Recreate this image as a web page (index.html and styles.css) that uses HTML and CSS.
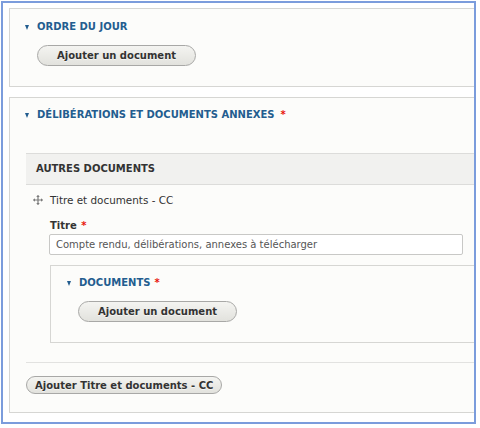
FILE: index.html
```html
<!DOCTYPE html>
<html lang="fr">
<head>
    <meta charset="UTF-8">
    <meta name="viewport" content="width=device-width, initial-scale=1.0">
    <title>Conseil communautaire - Édition</title>
    <link rel="stylesheet" href="styles.css">
</head>
<body>
    <div class="frame">
        <div class="fieldset fs-ordre">
            <div class="legend"><span class="arrow"></span>Ordre du jour</div>
            <button type="button" class="btn">Ajouter un document</button>
        </div>

        <div class="fieldset fs-delib">
            <div class="legend"><span class="arrow"></span>Délibérations et documents annexes <span class="req">*</span></div>

            <div class="table">
                <div class="table-head">Autres documents</div>
                <div class="table-row">
                    <div class="row-title">
                        <svg class="handle" width="10" height="10" viewBox="0 0 10 10">
                            <path d="M5 0.5 L5 9.5 M0.5 5 L9.5 5" stroke="#7a7a7a" stroke-width="1.2" fill="none"/>
                            <path d="M5 0 L3.2 2 L6.8 2 Z M5 10 L3.2 8 L6.8 8 Z M0 5 L2 3.2 L2 6.8 Z M10 5 L8 3.2 L8 6.8 Z" fill="#7a7a7a"/>
                        </svg>
                        Titre et documents - CC
                    </div>
                    <div class="form-item">
                        <label for="titre">Titre <span class="req">*</span></label>
                        <input type="text" id="titre" value="Compte rendu, délibérations, annexes à télécharger">
                    </div>
                    <div class="fieldset fs-docs">
                        <div class="legend"><span class="arrow"></span>Documents <span class="req">*</span></div>
                        <button type="button" class="btn">Ajouter un document</button>
                    </div>
                </div>
            </div>

            <button type="button" class="btn btn-small">Ajouter Titre et documents - CC</button>
        </div>
    </div>
</body>
</html>
```

FILE: styles.css
```css
body {
    margin: 0;
    background: #fff;
    font-family: "DejaVu Sans", Verdana, sans-serif;
    font-size: 10px;
    color: #333;
}
.frame {
    margin: 1px;
    width: 475px;
    height: 423px;
    box-sizing: border-box;
    border: 2px solid #7b9cdc;
    padding: 5px 0 0 6px;
    overflow: hidden;
}
.fieldset {
    width: 520px;
    box-sizing: border-box;
    border: 1px solid #d6d6d3;
    background: #fcfcfa;
    display: flex;
    flex-direction: column;
    align-items: flex-start;
}
.legend {
    display: flex;
    align-items: center;
    height: 14px;
    line-height: 14px;
    padding-left: 15px;
    font-weight: bold;
    text-transform: uppercase;
    color: #235d8f;
}
.arrow {
    width: 0;
    height: 0;
    border-left: 2.5px solid transparent;
    border-right: 2.5px solid transparent;
    border-top: 5px solid #235d8f;
    margin-right: 8px;
}
.req {
    color: #e8140c;
    margin-left: 4px;
}
.btn {
    box-sizing: border-box;
    height: 21px;
    padding: 0 19px;
    border: 1px solid #a8a8a6;
    border-radius: 20px;
    background: linear-gradient(to bottom, #f4f4f1, #e2e2dd);
    font-family: "DejaVu Sans", Verdana, sans-serif;
    font-size: 10px;
    font-weight: bold;
    color: #333;
    text-shadow: 0 1px rgba(255,255,255,0.6);
    cursor: pointer;
}
.fs-ordre {
    padding: 11px 0 20px;
}
.fs-ordre .btn {
    margin: 11px 0 0 27px;
}
.fs-delib {
    margin-top: 10px;
    padding: 10px 0 18px;
}
.fs-delib > .legend .req {
    margin-left: 6px;
}
.table {
    margin: 31px 0 0 16px;
    width: 480px;
}
.table-head {
    box-sizing: border-box;
    height: 32px;
    line-height: 30px;
    padding-left: 10px;
    border-top: 1px solid #dcdcda;
    border-bottom: 1px solid #dcdcda;
    background: #f1f1ef;
    font-weight: bold;
    text-transform: uppercase;
}
.table-row {
    padding: 8px 0 19px;
    border-bottom: 1px solid #e2e2e0;
}
.row-title {
    display: flex;
    align-items: center;
    height: 14px;
    padding-left: 7px;
    font-size: 10.4px;
}
.handle {
    margin-right: 7px;
}
.form-item {
    margin: 12px 0 0 23px;
    display: flex;
    flex-direction: column;
}
label {
    height: 14px;
    line-height: 14px;
    padding-left: 1px;
    font-weight: bold;
}
label .req {
    margin-left: 1px;
}
input {
    margin-top: 1px;
    box-sizing: border-box;
    width: 414px;
    height: 21px;
    padding: 0 6px;
    border: 1px solid #c8c8c6;
    border-radius: 2px;
    background: #fff;
    font-family: "DejaVu Sans", Verdana, sans-serif;
    font-size: 10px;
    color: #555;
}
.fs-docs {
    margin: 10px 0 0 24px;
    width: 440px;
    padding: 10px 0 20px;
}
.fs-docs .legend {
    padding-left: 16px;
}
.fs-docs .btn {
    margin: 11px 0 0 27px;
}
.btn-small {
    height: 18px;
    padding: 0 8px;
    margin: 13px 0 0 16px;
}
```
